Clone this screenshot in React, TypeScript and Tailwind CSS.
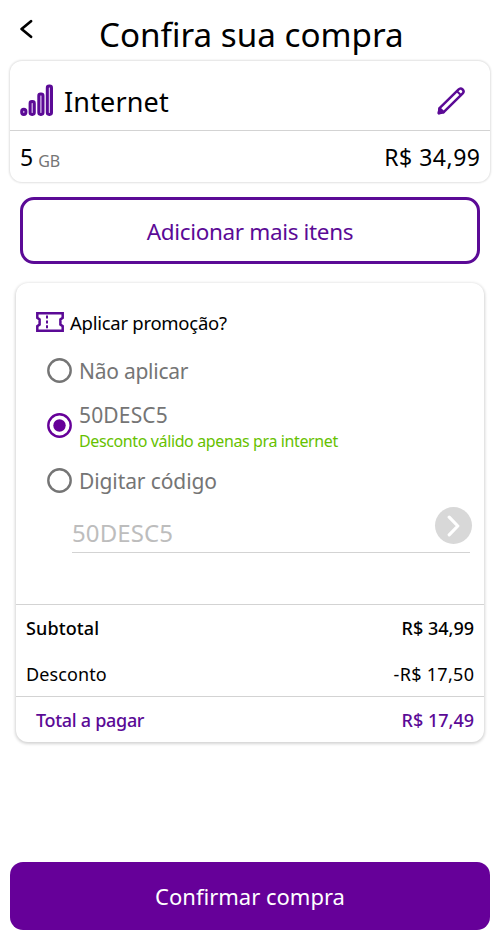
import { useState } from "react";
import clsx from "clsx";

type Promo = "none" | "saved" | "typed";

function SignalIcon() {
  return (
    <svg width="34" height="33" viewBox="0 0 34 33" fill="#dcc3ee" stroke="#5b0a96" strokeWidth="3">
      <rect x="1.7" y="25.2" width="4.2" height="5.2" rx="2.1" />
      <rect x="10.1" y="17.6" width="4.2" height="12.8" rx="1.8" />
      <rect x="18.8" y="9.9" width="4.2" height="20.5" rx="1.8" />
      <rect x="27.3" y="2.1" width="4.2" height="28.3" rx="1.8" />
    </svg>
  );
}

function PencilIcon() {
  return (
    <svg
      width="28"
      height="28"
      viewBox="0 0 28 28"
      fill="none"
      stroke="#5b0a96"
      strokeWidth="2.5"
      strokeLinejoin="round"
      strokeLinecap="round"
    >
      <path d="M1.8 26.2 2.6 21.2 21.4 2.6C22.6 1.4 24.4 1.3 25.6 2.5 26.8 3.7 26.7 5.5 25.5 6.7L6.7 25.2 1.8 26.2Z" />
      <path d="M2.6 21.4 6.6 25.2" />
      <path d="M20 4.2 23.8 8" strokeWidth="2" />
      <path d="M2.4 22.6 5 25 1.9 26Z" fill="#5b0a96" />
    </svg>
  );
}

function TicketIcon() {
  return (
    <svg width="28" height="20" viewBox="0 0 28 20" fill="none" stroke="#5b0a96" strokeWidth="2.5">
      <path d="M1.3 1.3H26.7V5.8L24.4 7.4V12.6L26.7 14.2V18.7H1.3V14.2L3.6 12.6V7.4L1.3 5.8Z" />
      <path d="M11 3.6V17" strokeWidth="2" strokeDasharray="3 1.8" />
    </svg>
  );
}

function Radio({ checked, onClick, label }: { checked: boolean; onClick: () => void; label: string }) {
  return (
    <button
      role="radio"
      aria-checked={checked}
      aria-label={label}
      onClick={onClick}
      className={clsx(
        "mb-[2px] flex h-[25px] w-[25px] shrink-0 items-center justify-center rounded-full",
        checked ? "text-[#660099]" : "text-[#757575]"
      )}
    >
      <svg width="25" height="25" viewBox="0 0 25 25">
        <circle cx="12.5" cy="12.5" r="11.2" fill="none" stroke="currentColor" strokeWidth="2.4" />
        {checked && <circle cx="12.5" cy="12.5" r="6.2" fill="currentColor" />}
      </svg>
    </button>
  );
}

export default function App() {
  const [promo, setPromo] = useState<Promo>("saved");

  return (
    <div className="flex h-[940px] w-[500px] flex-col bg-white font-['Noto_Sans',sans-serif] text-black">
      <header className="flex h-[61px] shrink-0 items-start pl-5">
        <button className="mt-[19px] w-3" aria-label="Voltar">
          <svg width="13" height="20" viewBox="0 0 13 20" fill="none" stroke="#000" strokeWidth="2.7" strokeLinecap="round" strokeLinejoin="round">
            <path d="M11 2.2 1.6 10 11 17.8" />
          </svg>
        </button>
        <h1 className="ml-[67px] mt-3 whitespace-nowrap text-[33.2px] leading-[46px]">Confira sua compra</h1>
      </header>

      <section className="mx-[10px] h-[121px] shrink-0 rounded-xl shadow-[0_0_2px_1px_rgba(0,0,0,0.12)]">
        <div className="flex h-[70px] items-center border-b border-[#d3d3d3] pl-[10px] pr-[25px] pt-[10px]">
          <SignalIcon />
          <h2 className="ml-[10px] mt-[2px] text-[27px] leading-8 tracking-[0.15px]">Internet</h2>
          <button className="ml-auto" aria-label="Editar">
            <PencilIcon />
          </button>
        </div>
        <div className="flex h-[51px] items-center justify-between px-[10px] pt-px text-[23px]">
          <p className="flex items-baseline gap-[5px]">
            5 <span className="translate-y-px text-base text-[#757575]">GB</span>
          </p>
          <p className="-mr-[0.5px] tracking-[0.5px]">R$ 34,99</p>
        </div>
      </section>

      <button className="mx-5 mt-[15px] h-[67px] shrink-0 rounded-[14px] border-[3px] border-[#5b0a96] pt-[2px] text-[22.5px] tracking-[-0.35px] text-[#5b0a96]">
        Adicionar mais itens
      </button>

      <section className="mx-4 mt-[19px] h-[459px] shrink-0 rounded-xl shadow-[0_1px_3px_1px_rgba(0,0,0,0.17)]">
        <div className="flex h-[321px] flex-col pl-5 pr-[14px] pt-[24px]">
          <div className="flex h-8 items-center gap-[6px]">
            <div className="mb-[2px]">
              <TicketIcon />
            </div>
            <h3 className="text-[18.5px] tracking-[-0.27px]">Aplicar promoção?</h3>
          </div>
          <div role="radiogroup" className="ml-[11px] text-[21px] text-[#757575]">
            <div className="mt-4 flex h-8 items-center gap-[7px]">
              <Radio checked={promo === "none"} onClick={() => setPromo("none")} label="Não aplicar" />
              <span className="mt-[2px] tracking-[-0.25px]">Não aplicar</span>
            </div>
            <div className="mt-[13px] flex h-[52px] items-center gap-[7px]">
              <Radio checked={promo === "saved"} onClick={() => setPromo("saved")} label="50DESC5" />
              <div className="mt-[3px]">
                <p className="leading-[26px] tracking-[0.15px]">50DESC5</p>
                <p className="text-base leading-[26px] tracking-[-0.38px] text-[#66c100]">
                  Desconto válido apenas pra internet
                </p>
              </div>
            </div>
            <div className="mt-[13px] flex h-8 items-center gap-[7px]">
              <Radio checked={promo === "typed"} onClick={() => setPromo("typed")} label="Digitar código" />
              <span className="mt-[2px] tracking-[-0.1px]">Digitar código</span>
            </div>
          </div>
          <div className="ml-9 mt-[7px] flex h-[49px] items-center justify-between border-b border-[#d3d3d3] text-2xl text-[#bdbdbd]">
            <span className="mt-[10px] tracking-[0.1px]">50DESC5</span>
            <button className="-mr-[2px] mb-[5px] flex h-[37px] w-[37px] items-center justify-center rounded-full bg-[#d8d8d8]" aria-label="Validar">
              <svg width="13" height="22" viewBox="0 0 13 22" fill="none" stroke="#fff" strokeWidth="3.2" strokeLinecap="round" strokeLinejoin="round">
                <path d="M2.2 2.2 10.8 11 2.2 19.8" />
              </svg>
            </button>
          </div>
        </div>
        <div className="h-[92px] border-t border-[#d3d3d3] px-[10px] text-lg">
          <div className="flex h-[46px] items-center justify-between font-medium">
            <span className="tracking-[0.1px]">Subtotal</span>
            <span>R$ 34,99</span>
          </div>
          <div className="flex h-[45px] items-center justify-between">
            <span className="tracking-[0.1px]">Desconto</span>
            <span className="-mr-[0.3px] tracking-[0.3px]">-R$ 17,50</span>
          </div>
        </div>
        <div className="flex h-[46px] items-center justify-between border-t border-[#d3d3d3] pl-5 pr-[10px] text-lg font-medium text-[#5b0a96]">
          <span className="tracking-[-0.3px]">Total a pagar</span>
          <span>R$ 17,49</span>
        </div>
      </section>

      <button className="mx-[10px] mb-[10px] mt-auto h-[68px] shrink-0 rounded-[13px] bg-[#660099] pt-px text-[22px] text-white">
        Confirmar compra
      </button>
    </div>
  );
}
